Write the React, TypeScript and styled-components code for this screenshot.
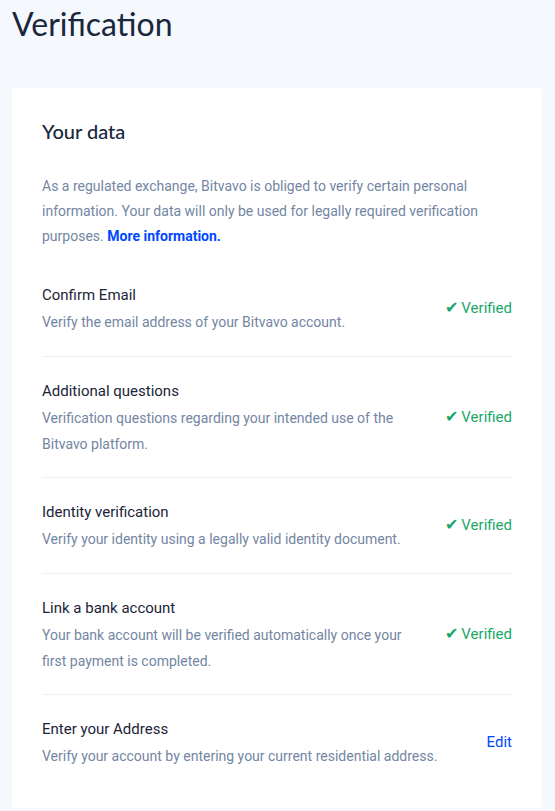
import React from 'react';
import styled, { createGlobalStyle } from 'styled-components';

const GlobalStyle = createGlobalStyle`
  html, body {
    margin: 0;
    padding: 0;
    background: #f5f8fc;
  }
  body {
    font-family: Roboto, "Liberation Sans", sans-serif;
    -webkit-font-smoothing: antialiased;
  }
`;

const Page = styled.div`
  padding: 4px 13px 5px 12px;
  min-height: 100vh;
  box-sizing: border-box;
`;

const PageTitle = styled.h1`
  margin: 0 0 44px;
  font-family: Lato, "Noto Sans", sans-serif;
  font-size: 32px;
  line-height: 40px;
  font-weight: 400;
  color: #19273d;
`;

const Card = styled.section`
  background: #ffffff;
  border-radius: 4px;
  padding: 28px 30px 18px;
`;

const CardTitle = styled.h2`
  margin: 0 0 28px;
  font-family: Lato, "Noto Sans", sans-serif;
  font-size: 20px;
  line-height: 30px;
  font-weight: 500;
  color: #19273d;
`;

const Intro = styled.p`
  margin: 0 0 12px;
  font-size: 14px;
  line-height: 25px;
  color: #7386a3;
`;

const InfoLink = styled.a`
  color: #0047ff;
  font-weight: 700;
  text-decoration: none;
`;

const Row = styled.div<{ $last?: boolean }>`
  display: flex;
  align-items: center;
  gap: 24px;
  padding: 20px 0 20.5px;
  border-bottom: ${p => (p.$last ? 'none' : '1px solid #edf1f6')};
`;

const RowText = styled.div`
  flex: 1;
  min-width: 0;
`;

const RowTitle = styled.div`
  font-size: 15px;
  line-height: 28px;
  color: #1b2438;
`;

const RowDesc = styled.div`
  font-size: 14px;
  line-height: 26px;
  color: #7386a3;
`;

const Status = styled.span`
  flex-shrink: 0;
  font-size: 15px;
  line-height: 20px;
  color: #1ba868;
  white-space: nowrap;
`;

const Check = styled.span`
  font-family: "DejaVu Sans", sans-serif;
  font-size: 16px;
  margin-right: 3px;
`;

const EditLink = styled.a`
  flex-shrink: 0;
  font-size: 15px;
  line-height: 20px;
  color: #0047ff;
  text-decoration: none;
  cursor: pointer;
`;

interface Step {
  title: string;
  desc: string;
  verified: boolean;
}

const steps: Step[] = [
  { title: 'Confirm Email', desc: 'Verify the email address of your Bitvavo account.', verified: true },
  {
    title: 'Additional questions',
    desc: 'Verification questions regarding your intended use of the Bitvavo platform.',
    verified: true,
  },
  {
    title: 'Identity verification',
    desc: 'Verify your identity using a legally valid identity document.',
    verified: true,
  },
  {
    title: 'Link a bank account',
    desc: 'Your bank account will be verified automatically once your first payment is completed.',
    verified: true,
  },
  {
    title: 'Enter your Address',
    desc: 'Verify your account by entering your current residential address.',
    verified: false,
  },
];

export default function App() {
  return (
    <>
      <GlobalStyle />
      <Page>
        <PageTitle>Verification</PageTitle>
        <Card>
          <CardTitle>Your data</CardTitle>
          <Intro>
            As a regulated exchange, Bitvavo is obliged to verify certain personal information. Your data
            will only be used for legally required verification purposes.{' '}
            <InfoLink href="#">More information.</InfoLink>
          </Intro>
          {steps.map((s, i) => (
            <Row key={s.title} $last={i === steps.length - 1}>
              <RowText>
                <RowTitle>{s.title}</RowTitle>
                <RowDesc>{s.desc}</RowDesc>
              </RowText>
              {s.verified ? (
                <Status>
                  <Check>✔</Check>Verified
                </Status>
              ) : (
                <EditLink>Edit</EditLink>
              )}
            </Row>
          ))}
        </Card>
      </Page>
    </>
  );
}
